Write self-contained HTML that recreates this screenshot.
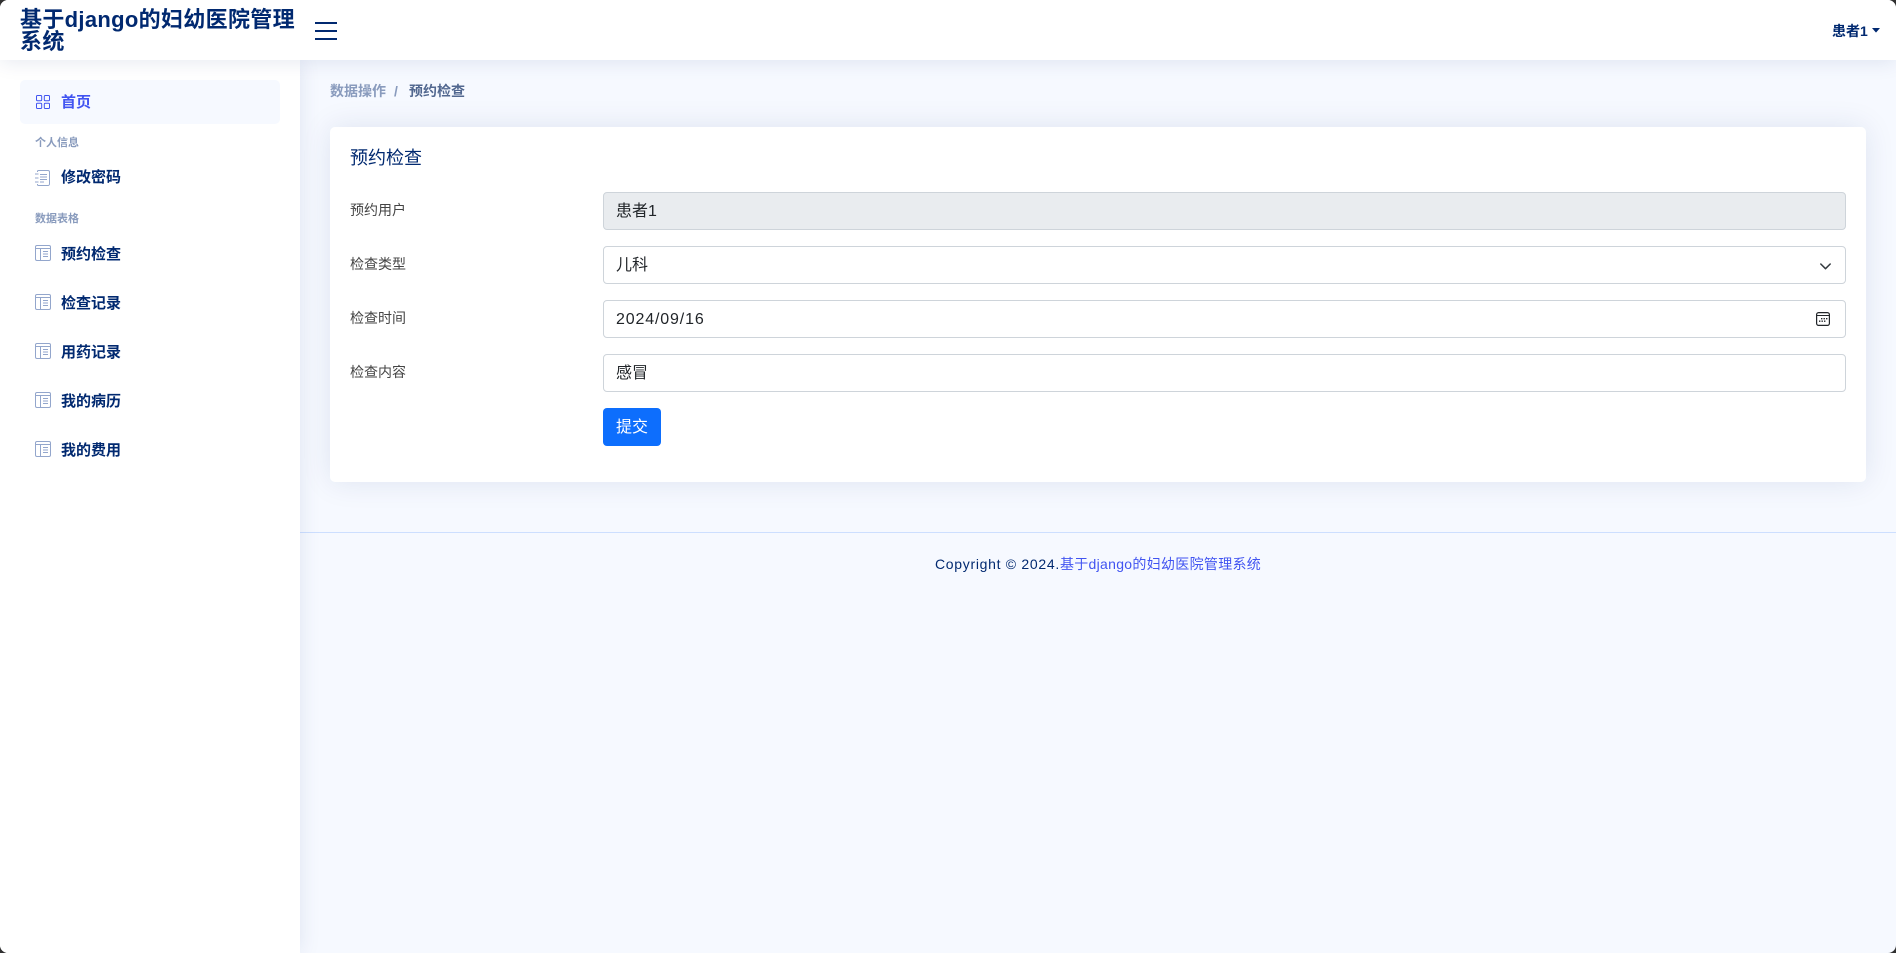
<!DOCTYPE html>
<html lang="zh-CN">
<head>
<meta charset="utf-8">
<title>预约检查</title>
<style>
*{box-sizing:border-box}
html,body{margin:0;padding:0;width:1896px;height:953px;overflow:hidden;background:#303030}
body{font-family:"Liberation Sans","Noto Sans CJK SC",sans-serif;color:#444}
#wrap{position:absolute;left:0;top:0;width:1896px;height:953px;border-radius:8px;overflow:hidden;background:#f6f9ff}
.a{position:absolute;white-space:nowrap}
#header{position:absolute;left:0;top:0;width:1896px;height:60px;background:#fff;box-shadow:0 2px 20px rgba(1,41,112,.1);z-index:5}
#sidebar{position:absolute;left:0;top:60px;width:300px;height:893px;background:#fff;box-shadow:0 0 20px rgba(1,41,112,.1);z-index:4}
.nav{font-size:15px;font-weight:700;color:#012970;line-height:20px;left:61px}
.head{font-size:11px;font-weight:700;color:#899bbd;line-height:14px;left:35px}
.lab{font-size:14px;color:#444;left:350px;line-height:20px}
.inp{position:absolute;left:603px;width:1243px;height:38px;border:1px solid #ced4da;border-radius:4px;background:#fff;font-size:16px;color:#212529;line-height:38px;padding-left:12px}
svg{position:absolute;display:block}
</style>
</head>
<body>
<div id="wrap">
<div id="header">
  <div class="a" style="left:20px;top:9px;width:280px;white-space:normal;font-size:22px;font-weight:700;color:#012970;line-height:21.500px;letter-spacing:.32px">基于django的妇幼医院管理系统</div>
  <svg style="left:315px;top:20px" width="22" height="22" viewBox="0 0 22 22"><path d="M0 3H22M0 11H22M0 19H22" stroke="#012970" stroke-width="2" fill="none"/></svg>
  <div class="a" style="left:1832px;top:21px;font-size:14px;font-weight:700;color:#012970;line-height:20px">患者1</div>
  <svg style="left:1872px;top:28px" width="8" height="5" viewBox="0 0 8 5"><path d="M0 0H8L4 4.600Z" fill="#012970"/></svg>
</div>

<div id="sidebar"></div>
<div style="position:absolute;inset:0;z-index:6;pointer-events:none">
  <div class="a" style="left:20px;top:80px;width:260px;height:44px;background:#f6f9ff;border-radius:5px"></div>

  <svg style="left:36px;top:95px" width="14" height="14" viewBox="0 0 14 14" fill="none" stroke="#4154f1" stroke-width="1"><rect x=".5" y=".5" width="5.200" height="5.200" rx="1"/><rect x="8.300" y=".5" width="5.200" height="5.200" rx="1"/><rect x=".5" y="8.300" width="5.200" height="5.200" rx="1"/><rect x="8.300" y="8.300" width="5.200" height="5.200" rx="1"/></svg>
  <div class="a nav" style="top:93px;color:#4154f1">首页</div>

  <div class="a head" style="top:136px">个人信息</div>

  <svg style="left:35px;top:170px" width="15" height="16" viewBox="0 0 15 16" fill="none" stroke="#93a6cc" stroke-width="1"><path d="M2.500 2V1.500A1 1 0 0 1 3.500.5H13A1.500 1.500 0 0 1 14.500 2V14A1.500 1.500 0 0 1 13 15.500H3.500A1 1 0 0 1 2.500 14.500V14"/><path d="M5 4.500H12M5 7H12M5 9.500H12M5 12H9"/><path d="M0 4H3.500M0 8H3.500M0 12H3.500"/></svg>
  <div class="a nav" style="top:168px">修改密码</div>

  <div class="a head" style="top:212px">数据表格</div>

  <svg style="left:35px;top:245px" width="16" height="16" viewBox="0 0 16 16" fill="none" stroke="#93a6cc" stroke-width="1"><rect x=".5" y=".5" width="15" height="15" rx="1.500"/><path d="M1 3.500H15M5.500 3.500V15M8 6.500H13M8 9H13M8 11.500H13"/></svg>
  <div class="a nav" style="top:245px">预约检查</div>

  <svg style="left:35px;top:294px" width="16" height="16" viewBox="0 0 16 16" fill="none" stroke="#93a6cc" stroke-width="1"><rect x=".5" y=".5" width="15" height="15" rx="1.500"/><path d="M1 3.500H15M5.500 3.500V15M8 6.500H13M8 9H13M8 11.500H13"/></svg>
  <div class="a nav" style="top:294px">检查记录</div>

  <svg style="left:35px;top:343px" width="16" height="16" viewBox="0 0 16 16" fill="none" stroke="#93a6cc" stroke-width="1"><rect x=".5" y=".5" width="15" height="15" rx="1.500"/><path d="M1 3.500H15M5.500 3.500V15M8 6.500H13M8 9H13M8 11.500H13"/></svg>
  <div class="a nav" style="top:343px">用药记录</div>

  <svg style="left:35px;top:392px" width="16" height="16" viewBox="0 0 16 16" fill="none" stroke="#93a6cc" stroke-width="1"><rect x=".5" y=".5" width="15" height="15" rx="1.500"/><path d="M1 3.500H15M5.500 3.500V15M8 6.500H13M8 9H13M8 11.500H13"/></svg>
  <div class="a nav" style="top:392px">我的病历</div>

  <svg style="left:35px;top:441px" width="16" height="16" viewBox="0 0 16 16" fill="none" stroke="#93a6cc" stroke-width="1"><rect x=".5" y=".5" width="15" height="15" rx="1.500"/><path d="M1 3.500H15M5.500 3.500V15M8 6.500H13M8 9H13M8 11.500H13"/></svg>
  <div class="a nav" style="top:441px">我的费用</div>
</div>

<!-- main -->
<div class="a" style="left:330px;top:81px;font-size:14px;line-height:20px;font-weight:700;color:#899bbd">数据操作</div>
<div class="a" style="left:394px;top:81px;font-size:14px;line-height:20px;font-weight:700;color:#899bbd">/</div>
<div class="a" style="left:409px;top:81px;font-size:14px;line-height:20px;font-weight:700;color:#51678f">预约检查</div>

<div class="a" style="left:330px;top:127px;width:1536px;height:355px;background:#fff;border-radius:5px;box-shadow:0 0 30px rgba(1,41,112,.1)"></div>
<div class="a" style="left:350px;top:145px;font-size:18px;line-height:26px;color:#012970">预约检查</div>

<div class="a lab" style="top:200px">预约用户</div>
<div class="inp" style="top:192px;background:#e9ecef">患者1</div>

<div class="a lab" style="top:254px">检查类型</div>
<div class="inp" style="top:246px">儿科</div>
<svg style="left:1820px;top:263px" width="11" height="7" viewBox="0 0 11 7"><path d="M.8 1L5.500 5.700L10.200 1" fill="none" stroke="#343a40" stroke-width="1.500" stroke-linecap="round" stroke-linejoin="round"/></svg>

<div class="a lab" style="top:308px">检查时间</div>
<div class="inp" style="top:300px;letter-spacing:.85px">2024/09/16</div>
<svg style="left:1816px;top:312px" width="14" height="14" viewBox="0 0 14 14" fill="none"><rect x=".6" y=".6" width="12.800" height="12.800" rx="2" stroke="#212529" stroke-width="1.200"/><path d="M1 3.500H13" stroke="#212529" stroke-width="1"/><path d="M5 6H6.400V7.400H5ZM7.500 6H8.900V7.400H7.500ZM10 6H11.400V7.400H10ZM3 8.500H4.400V9.900H3ZM5.500 8.500H6.900V9.900H5.500ZM8 8.500H9.400V9.900H8Z" fill="#212529"/></svg>

<div class="a lab" style="top:362px">检查内容</div>
<div class="inp" style="top:354px">感冒</div>

<div class="a" style="left:603px;top:408px;width:58px;height:38px;background:#0d6efd;border-radius:4px;color:#fff;font-size:16px;line-height:40px;text-align:center">提交</div>

<div class="a" style="left:300px;top:532px;width:1596px;height:1px;background:#cddfff"></div>
<div class="a" style="left:935px;top:554px;font-size:14px;line-height:20px;color:#012970;letter-spacing:.7px">Copyright © 2024.<span style="color:#4154f1;letter-spacing:.3px">基于django的妇幼医院管理系统</span></div>
</div>
</body>
</html>
